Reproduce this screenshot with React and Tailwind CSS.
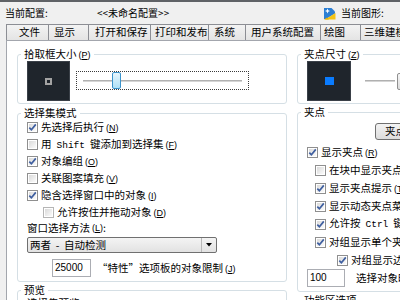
import React from "react";

function Key({ k }) {
  return (
    <span className="ml-[2px] font-['Liberation_Sans',sans-serif] text-[9px]">
      (<span className="underline">{k}</span>)
    </span>
  );
}

function Mono({ children }) {
  return (
    <span className="font-['Liberation_Mono',monospace] text-[9.5px] mx-[5px]">{children}</span>
  );
}

function Checkbox({ checked, dim }) {
  return (
    <span
      className={`w-[11px] h-[11px] shrink-0 border ${dim ? "border-[#b5b5b5]" : "border-[#8f8f8f]"} bg-white p-[1px] flex`}
    >
      <span className="flex-1 bg-gradient-to-br from-[#dadada] to-[#fbfbfb] flex items-center justify-center">
        {checked && (
          <svg width="9" height="9" viewBox="0 0 9 9" className="-m-[1px]">
            <path d="M1.3 4.6 L3.4 6.8 L7.8 1.4" fill="none" stroke="#3f5fa0" strokeWidth="1.7" />
          </svg>
        )}
      </span>
    </span>
  );
}

function Row({ checked, indent = "", h = "h-[17px]", dim, children }) {
  return (
    <div className={`flex items-center shrink-0 ${h} ${indent}`}>
      <Checkbox checked={checked} dim={dim} />
      <span className="ml-[3px] whitespace-nowrap">{children}</span>
    </div>
  );
}

function Group({ title, className = "", children }) {
  return (
    <div className={`border border-[#d5dfe5] rounded-[3px] flex flex-col ${className}`}>
      <span className="-mt-[8px] ml-[3px] px-[3px] bg-white leading-[14px] self-start whitespace-nowrap">
        {title}
      </span>
      {children}
    </div>
  );
}

const tabs = [
  ["文件", "w-[42px] pl-[12px]"],
  ["显示", "w-[40px] pl-[5px]"],
  ["打开和保存", "w-[62px] pl-[6px]"],
  ["打印和发布", "w-[58px] pl-[4px]"],
  ["系统", "w-[37px] pl-[5px]"],
  ["用户系统配置", "w-[75px] pl-[5px]"],
  ["绘图", "w-[40px] pl-[3px]"],
  ["三维建模", "w-[60px] pl-[3px]"],
];

export default function App() {
  return (
    <div className="w-[400px] h-[300px] overflow-hidden bg-[#f0f0f0] text-black font-['Noto_Sans_CJK_SC','Noto_Sans',sans-serif] text-[10.5px] leading-none flex flex-col">
      <div className="h-[2px] bg-[#5f6266] shrink-0" />
      <div className="h-[22px] flex items-center shrink-0 text-[10px]">
        <span className="ml-[5px] w-[92px] shrink-0">当前配置:</span>
        <span className="w-[226px] shrink-0">&lt;&lt;未命名配置&gt;&gt;</span>
        <svg width="13" height="13" viewBox="0 0 13 13" className="shrink-0">
          <path d="M1 1 H8.5 L12 4.5 V6.5 L3 12 H1 Z" fill="#2c7fd4" />
          <path d="M2 12.5 L12.5 6 V12.5 Z" fill="#f3c418" />
          <path d="M1 12.5 L4 10.5 L6 12.5 Z" fill="#e9b000" />
          <path d="M4.5 1.5 L5.2 3.3 L7 4 L5.2 4.7 L4.5 6.5 L3.8 4.7 L2 4 L3.8 3.3 Z" fill="#ffffff" />
        </svg>
        <span className="ml-[5px] whitespace-nowrap">当前图形:</span>
      </div>
      <div className="h-[16px] flex ml-[6px] shrink-0">
        {tabs.map(([t, c], i) => (
          <div
            key={i}
            className={`${c} shrink-0 border-l border-t border-[#8c8e94] bg-gradient-to-b from-[#f3f3f3] to-[#e4e4e4] flex items-center whitespace-nowrap`}
          >
            {t}
          </div>
        ))}
      </div>
      <div className="flex-1 ml-[6px] bg-white border-l border-t border-[#a3a6ad] flex pl-[10px] pt-[13px] gap-[10px] overflow-hidden">
        {/* left column */}
        <div className="w-[270px] shrink-0 flex flex-col">
          <Group title={<>拾取框大小<Key k="P" /></>} className="h-[50px] shrink-0">
            <div className="flex items-start -mt-[1px]">
              <div className="ml-[9px] w-[43px] h-[40px] shrink-0 bg-[#1f252c] border border-[#3a4048] flex items-center justify-center">
                <div className="w-[7px] h-[7px] border-[2px] border-[#a3a3a3]" />
              </div>
              <div className="ml-[6px] mt-[10px] w-[173px] h-[19px] shrink-0 border border-dotted border-[#3a3a3a] relative flex items-center px-[6px]">
                <div className="w-full h-[2px] bg-[#d4d4d4] border-t border-[#b0b0b0]" />
                <div className="absolute left-[35px] top-0 w-[9px] h-[17px] rounded-[2px] border border-[#3c94cc] bg-gradient-to-b from-[#e6f6fd] to-[#aee0f6]" />
              </div>
            </div>
          </Group>
          <Group title="选择集模式" className="mt-[9px] h-[169px] shrink-0">
            <div className="flex flex-col -mt-[1px] pl-[9px]">
              <Row checked>先选择后执行<Key k="N" /></Row>
              <Row>用<Mono>Shift</Mono>键添加到选择集<Key k="F" /></Row>
              <Row checked>对象编组<Key k="O" /></Row>
              <Row>关联图案填充<Key k="V" /></Row>
              <Row checked>隐含选择窗口中的对象<Key k="I" /></Row>
              <Row indent="ml-[16px]" dim>允许按住并拖动对象<Key k="D" /></Row>
              <div className="h-[14px] flex items-center whitespace-nowrap">窗口选择方法<Key k="L" />:</div>
              <div className="mt-[2px] w-[190px] h-[16px] shrink-0 border border-[#707070] rounded-[2px] bg-gradient-to-b from-[#f4f4f4] to-[#e2e2e2] flex items-center">
                <span className="pl-[2px] flex-1 whitespace-pre">两者  -  自动检测</span>
                <span className="w-[15px] h-full border-l border-[#b8b8b8] flex items-center justify-center">
                  <svg width="6" height="4" viewBox="0 0 6 4">
                    <path d="M0 0 H6 L3 3.5 Z" fill="#000" />
                  </svg>
                </span>
              </div>
              <div className="mt-[6px] flex items-center">
                <div className="ml-[25px] w-[39px] h-[18px] shrink-0 border border-[#abadb3] bg-white flex items-center pl-[2px] font-['Liberation_Sans',sans-serif] text-[10px]">
                  25000
                </div>
                <span className="ml-[6px] whitespace-nowrap">“特性”选项板的对象限制<Key k="J" /></span>
              </div>
            </div>
          </Group>
          <Group title="预览" className="mt-[8px] h-[60px] shrink-0">
            <div className="pl-[9px] mt-[1px] whitespace-nowrap">选择集预览</div>
          </Group>
        </div>
        {/* right column */}
        <div className="w-[130px] shrink-0 flex flex-col">
          <Group title={<>夹点尺寸<Key k="Z" /></>} className="h-[50px] shrink-0">
            <div className="flex items-center -mt-[1px]">
              <div className="ml-[9px] w-[44px] h-[40px] shrink-0 bg-[#1f252c] border border-[#3a4048] flex items-center justify-center">
                <div className="w-[9px] h-[8px] bg-[#0a7cff]" />
              </div>
              <div className="ml-[14px] w-[30px] h-[2px] shrink-0 bg-[#d4d4d4] border-t border-[#b0b0b0]" />
              <div className="ml-[2px] w-[10px] h-[17px] shrink-0 rounded-[2px] border border-[#8f8f8f] bg-gradient-to-b from-[#f6f6f6] to-[#dcdcdc]" />
            </div>
          </Group>
          <Group title="夹点" className="mt-[8px] h-[180px] shrink-0">
            <div className="flex flex-col pl-[9px]">
              <div className="mt-[4px] ml-[68px] w-[80px] h-[17px] shrink-0 border border-[#707070] rounded-[3px] bg-gradient-to-b from-[#f3f3f3] to-[#dddddd] flex items-center pl-[9px] whitespace-nowrap">
                夹点颜色<Key k="C" />...
              </div>
              <div className="mt-[3px]" />
              <Row checked h="h-[18px]">显示夹点<Key k="R" /></Row>
              <Row h="h-[18px]" indent="ml-[8px]">在块中显示夹点<Key k="B" /></Row>
              <Row checked h="h-[18px]" indent="ml-[8px]">显示夹点提示<Key k="T" /></Row>
              <Row checked h="h-[18px]" indent="ml-[8px]">显示动态夹点菜单<Key k="U" /></Row>
              <Row checked h="h-[18px]" indent="ml-[8px]">允许按<Mono>Ctrl</Mono>键循环改变对象编辑方式行为<Key k="Y" /></Row>
              <Row checked h="h-[18px]" indent="ml-[8px]">对组显示单个夹点<Key k="E" /></Row>
              <Row checked h="h-[18px]" indent="ml-[30px]">对组显示边界框<Key k="X" /></Row>
              <div className="flex items-center">
                <div className="w-[38px] h-[18px] shrink-0 border border-[#abadb3] bg-white flex items-center pl-[2px] font-['Liberation_Sans',sans-serif] text-[10px]">
                  100
                </div>
                <span className="ml-[11px] whitespace-nowrap">选择对象时限制显示的夹点数<Key k="M" /></span>
              </div>
            </div>
          </Group>
          <Group title="功能区选项" className="mt-[8px] h-[40px] shrink-0" />
        </div>
      </div>
    </div>
  );
}
